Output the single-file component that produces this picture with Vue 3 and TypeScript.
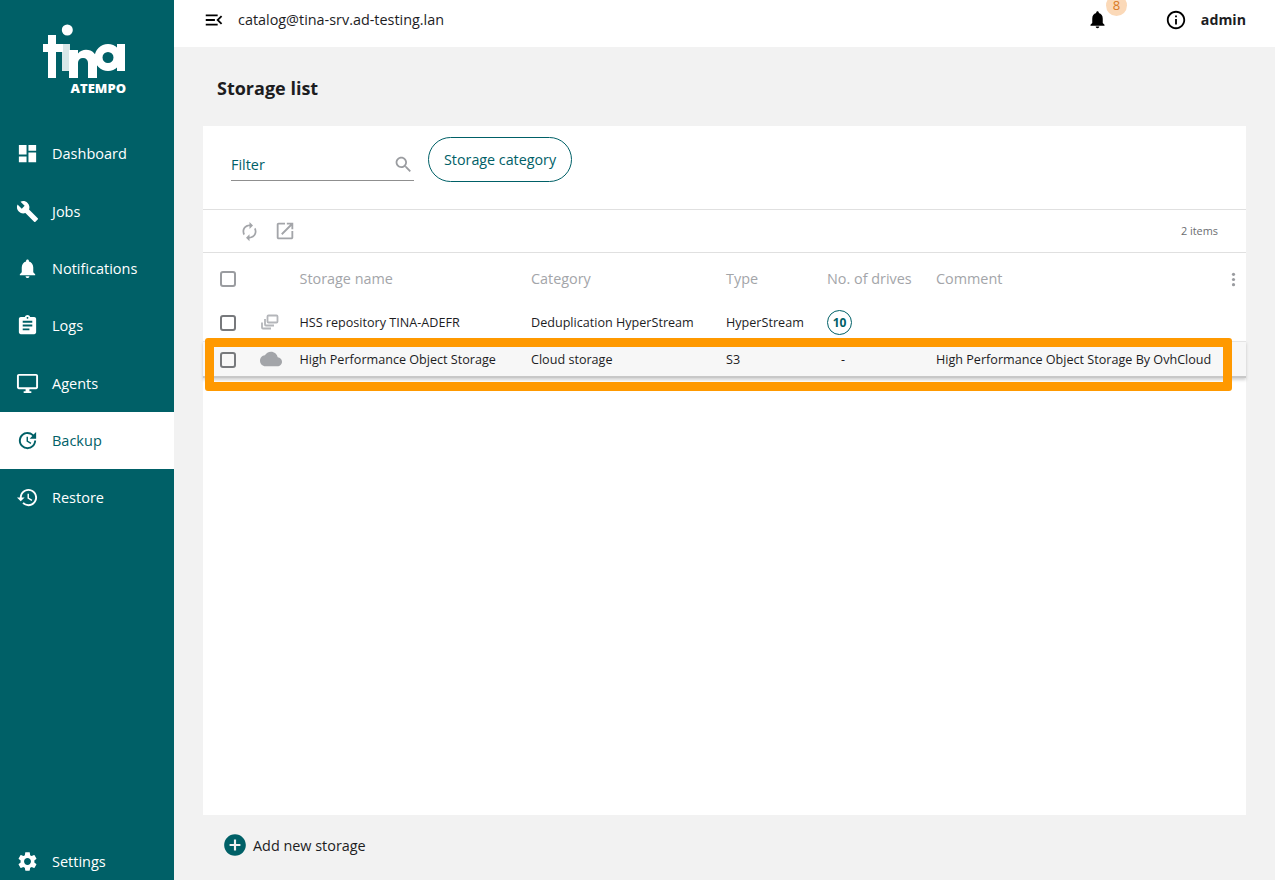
<script setup lang="ts">
interface NavItem {
  label: string;
  icon: string;
  active?: boolean;
}

const nav: NavItem[] = [
  { label: 'Dashboard', icon: 'M3 13h8V3H3v10zm0 8h8v-6H3v6zm10 0h8V11h-8v10zm0-18v6h8V3h-8z' },
  { label: 'Jobs', icon: 'M22.7 19l-9.1-9.1c.9-2.3.4-5-1.5-6.9-2-2-5-2.4-7.4-1.3L9 6 6 9 1.6 4.7C.4 7.1.9 10.1 2.9 12.1c1.9 1.9 4.6 2.4 6.9 1.5l9.1 9.1c.4.4 1 .4 1.4 0l2.3-2.3c.5-.4.5-1.1.1-1.4z' },
  { label: 'Notifications', icon: 'M12 22c1.1 0 2-.9 2-2h-4c0 1.1.89 2 2 2zm6-6v-5c0-3.07-1.64-5.64-4.5-6.32V4c0-.83-.67-1.5-1.5-1.5s-1.5.67-1.5 1.5v.68C7.63 5.36 6 7.92 6 11v5l-2 2v1h16v-1l-2-2z' },
  { label: 'Logs', icon: 'M19 3h-4.18C14.4 1.84 13.3 1 12 1c-1.3 0-2.4.84-2.82 2H5c-1.1 0-2 .9-2 2v14c0 1.1.9 2 2 2h14c1.1 0 2-.9 2-2V5c0-1.1-.9-2-2-2zm-7 0c.55 0 1 .45 1 1s-.45 1-1 1-1-.45-1-1 .45-1 1-1zm2 14H7v-2h7v2zm3-4H7v-2h10v2zm0-4H7V7h10v2z' },
  { label: 'Agents', icon: 'M21 2H3c-1.1 0-2 .9-2 2v12c0 1.1.9 2 2 2h7v2H8v2h8v-2h-2v-2h7c1.1 0 2-.9 2-2V4c0-1.1-.9-2-2-2zm0 14H3V4h18v12z' },
  { label: 'Backup', active: true, icon: 'M21 10.12h-6.78l2.74-2.82c-2.73-2.7-7.15-2.8-9.88-.1-2.73 2.71-2.73 7.08 0 9.79s7.15 2.71 9.88 0C18.32 15.65 19 14.08 19 12.1h2c0 1.98-.88 4.55-2.64 6.29-3.51 3.48-9.21 3.48-12.72 0-3.5-3.47-3.53-9.11-.02-12.58s9.14-3.47 12.65 0L21 3v7.12zM12.5 8v4.25l3.5 2.08-.72 1.21L11 13V8h1.5z' },
  { label: 'Restore', icon: 'M13 3c-4.97 0-9 4.03-9 9H1l3.89 3.89.07.14L9 12H6c0-3.87 3.13-7 7-7s7 3.13 7 7-3.13 7-7 7c-1.93 0-3.68-.79-4.94-2.06l-1.42 1.42C8.27 19.99 10.51 21 13 21c4.97 0 9-4.03 9-9s-4.03-9-9-9zm-1 5v5l4.28 2.54.72-1.21-3.5-2.08V8H12z' },
];

const settingsIcon =
  'M19.14 12.94c.04-.3.06-.61.06-.94 0-.32-.02-.64-.07-.94l2.03-1.58c.18-.14.23-.41.12-.61l-1.92-3.32c-.12-.22-.37-.29-.59-.22l-2.39.96c-.5-.38-1.03-.7-1.62-.94l-.36-2.54c-.04-.24-.24-.41-.48-.41h-3.84c-.24 0-.43.17-.47.41l-.36 2.54c-.59.24-1.13.57-1.62.94l-2.39-.96c-.22-.08-.47 0-.59.22L2.74 8.87c-.12.21-.08.47.12.61l2.03 1.58c-.05.3-.09.63-.09.94s.02.64.07.94l-2.03 1.58c-.18.14-.23.41-.12.61l1.92 3.32c.12.22.37.29.59.22l2.39-.96c.5.38 1.03.7 1.62.94l.36 2.54c.05.24.24.41.48.41h3.84c.24 0 .44-.17.47-.41l.36-2.54c.59-.24 1.13-.56 1.62-.94l2.39.96c.22.08.47 0 .59-.22l1.92-3.32c.12-.22.07-.47-.12-.61l-2.01-1.58zM12 15.6c-1.98 0-3.6-1.62-3.6-3.6s1.62-3.6 3.6-3.6 3.6 1.62 3.6 3.6-1.62 3.6-3.6 3.6z';

const columns = ['Storage name', 'Category', 'Type', 'No. of drives', 'Comment'];
</script>

<template>
  <div class="app">
    <aside class="sidebar">
      <div class="logo">
        <svg class="logo-mark" viewBox="0 0 174 80" width="174" height="80" fill="#fff">
          <rect x="62" y="44" width="8" height="27" opacity="0.85" />
          <rect x="48" y="35" width="8" height="43" />
          <rect x="43" y="44" width="20" height="8" />
          <circle cx="67.3" cy="30" r="5.5" />
          <path d="M69 78V50h9v3.5c2-2.4 5-3.7 8-3.7 6.5 0 11 4.7 11 11.2V78h-9V63c0-3-1.8-5-5-5s-5 2-5 5v15z" />
          <circle cx="108" cy="57.5" r="9.5" fill="none" stroke="#fff" stroke-width="8" />
          <rect x="117" y="44" width="8" height="27" />
        </svg>
        <span class="logo-atempo">ATEMPO</span>
      </div>
      <nav class="nav">
        <a v-for="item in nav" :key="item.label" class="nav-item" :class="{ active: item.active }">
          <svg viewBox="0 0 24 24" width="23" height="23" fill="currentColor"><path :d="item.icon" /></svg>
          <span>{{ item.label }}</span>
        </a>
      </nav>
      <a class="nav-item settings">
        <svg viewBox="0 0 24 24" width="23" height="23" fill="currentColor"><path :d="settingsIcon" /></svg>
        <span>Settings</span>
      </a>
    </aside>

    <div class="main">
      <header class="topbar">
        <svg class="menu-icon" viewBox="0 0 24 24" width="22" height="22" fill="#000">
          <path d="M3 18h13v-2H3v2zm0-5h10v-2H3v2zm0-7v2h13V6H3zm18 9.59L17.42 12 21 8.41 19.59 7l-5 5 5 5L21 15.59z" />
        </svg>
        <span class="catalog">catalog@tina-srv.ad-testing.lan</span>
        <div class="bell">
          <svg viewBox="0 0 24 24" width="21" height="21" fill="#000">
            <path d="M12 22c1.1 0 2-.9 2-2h-4c0 1.1.89 2 2 2zm6-6v-5c0-3.07-1.64-5.64-4.5-6.32V4c0-.83-.67-1.5-1.5-1.5s-1.5.67-1.5 1.5v.68C7.63 5.36 6 7.92 6 11v5l-2 2v1h16v-1l-2-2z" />
          </svg>
          <span class="badge">8</span>
        </div>
        <svg class="info" viewBox="0 0 24 24" width="22" height="22" fill="#000">
          <path d="M11 7h2v2h-2zm0 4h2v6h-2zm1-9C6.48 2 2 6.48 2 12s4.48 10 10 10 10-4.48 10-10S17.52 2 12 2zm0 18c-4.41 0-8-3.59-8-8s3.59-8 8-8 8 3.59 8 8-3.59 8-8 8z" />
        </svg>
        <span class="user">admin</span>
      </header>

      <h1 class="title">Storage list</h1>

      <section class="card">
        <div class="filters">
          <label class="filter">
            <span>Filter</span>
            <svg viewBox="0 0 24 24" width="21" height="21" fill="#9a9ca0">
              <path d="M15.5 14h-.79l-.28-.27C15.41 12.59 16 11.11 16 9.5 16 5.91 13.09 3 9.5 3S3 5.91 3 9.5 5.91 16 9.5 16c1.61 0 3.09-.59 4.23-1.57l.27.28v.79l5 4.99L20.49 19l-4.99-5zm-6 0C7.01 14 5 11.99 5 9.5S7.01 5 9.5 5 14 7.01 14 9.5 11.99 14 9.5 14z" />
            </svg>
          </label>
          <button class="chip" type="button">Storage category</button>
        </div>

        <div class="toolbar">
          <svg viewBox="0 0 24 24" width="21" height="21" fill="#a3a5a9">
            <path d="M12 6v3l4-4-4-4v3c-4.42 0-8 3.58-8 8 0 1.57.46 3.03 1.24 4.26L6.7 14.8c-.45-.83-.7-1.79-.7-2.8 0-3.31 2.69-6 6-6zm6.76 1.74L17.3 9.2c.44.84.7 1.79.7 2.8 0 3.31-2.69 6-6 6v-3l-4 4 4 4v-3c4.42 0 8-3.58 8-8 0-1.57-.46-3.03-1.24-4.26z" />
          </svg>
          <svg viewBox="0 0 24 24" width="22" height="22" fill="#a3a5a9">
            <path d="M19 19H5V5h7V3H5c-1.11 0-2 .9-2 2v14c0 1.1.89 2 2 2h14c1.1 0 2-.9 2-2v-7h-2v7zM14 3v2h3.59l-9.83 9.83 1.41 1.41L19 6.41V10h2V3h-7z" />
          </svg>
          <span class="count">2 items</span>
        </div>

        <div class="row head">
          <span class="check"></span>
          <span></span>
          <span v-for="col in columns" :key="col">{{ col }}</span>
          <svg class="more" viewBox="0 0 4 16" width="5" height="15" fill="#9a9ca0">
            <circle cx="2" cy="2.5" r="1.7" /><circle cx="2" cy="8" r="1.7" /><circle cx="2" cy="13.5" r="1.7" />
          </svg>
        </div>

        <div class="row item">
          <span class="check"></span>
          <svg class="type-icon" viewBox="0 0 20 20" width="20" height="20" fill="none" stroke="#b4b6ba" stroke-width="1.8">
            <rect x="7.5" y="2.5" width="10" height="7" rx="1" />
            <path d="M5 6v5.5a1 1 0 0 0 1 1h8" />
            <path d="M2 9.5v5a1 1 0 0 0 1 1h8" />
          </svg>
          <span>HSS repository TINA-ADEFR</span>
          <span>Deduplication HyperStream</span>
          <span>HyperStream</span>
          <span><span class="drives">10</span></span>
          <span></span>
        </div>

        <div class="row item selected">
          <span class="check"></span>
          <svg class="type-icon" viewBox="0 0 24 24" width="22" height="22" fill="#a3a5a9">
            <path d="M19.35 10.04C18.67 6.59 15.64 4 12 4 9.11 4 6.6 5.64 5.35 8.04 2.34 8.36 0 10.91 0 14c0 3.31 2.69 6 6 6h13c2.76 0 5-2.24 5-5 0-2.64-2.05-4.78-4.65-4.96z" />
          </svg>
          <span>High Performance Object Storage</span>
          <span>Cloud storage</span>
          <span>S3</span>
          <span class="dash">-</span>
          <span>High Performance Object Storage By OvhCloud</span>
          <div class="highlight"></div>
        </div>
      </section>

      <div class="add">
        <svg viewBox="0 0 24 24" width="26" height="26" fill="#006067">
          <path d="M12 2C6.48 2 2 6.48 2 12s4.48 10 10 10 10-4.48 10-10S17.52 2 12 2zm5 11h-4v4h-2v-4H7v-2h4V7h2v4h4v2z" />
        </svg>
        <span>Add new storage</span>
      </div>
    </div>
  </div>
</template>

<style>
html,
body {
  margin: 0;
  overflow: hidden;
}
</style>

<style scoped>
.app {
  display: flex;
  width: 1275px;
  height: 880px;
  overflow: hidden;
  font-family: 'Open Sans', 'Liberation Sans', sans-serif;
  font-size: 14.4px;
  color: #1d1d1f;
  background: #f2f2f2;
}

.sidebar {
  display: flex;
  flex-direction: column;
  flex: 0 0 174px;
  color: #fff;
  background: #006067;
}

.logo {
  display: flex;
  flex-direction: column;
  flex: 0 0 125.25px;
}

.logo-mark {
  display: block;
}

.logo-atempo {
  width: 126px;
  margin-top: 1px;
  font-size: 13px;
  font-weight: 800;
  line-height: 14px;
  text-align: right;
}

.nav {
  display: flex;
  flex-direction: column;
  flex: 1;
}

.nav-item {
  display: flex;
  align-items: center;
  gap: 13px;
  height: 57.3px;
  padding-left: 16px;
  font-size: 14.5px;
}

.nav-item.active {
  color: #006067;
  background: #fff;
}

.settings {
  height: 36px;
  padding-bottom: 1px;
}

.main {
  display: flex;
  flex-direction: column;
  flex: 1;
  min-width: 0;
}

.topbar {
  display: flex;
  align-items: center;
  flex: 0 0 47px;
  box-sizing: border-box;
  padding: 0 29px 8px 0;
  background: #fff;
}

.menu-icon {
  margin-left: 29px;
}

.catalog {
  margin-left: 13px;
}

.bell {
  position: relative;
  display: flex;
  margin-left: auto;
}

.badge {
  position: absolute;
  top: -14px;
  left: 19px;
  width: 21px;
  height: 21px;
  border-radius: 50%;
  font-size: 13px;
  line-height: 21px;
  text-align: center;
  color: #d8791f;
  background: #fbd9b8;
}

.info {
  margin-left: 57px;
}

.user {
  margin-left: 14px;
  font-size: 14.2px;
  font-weight: 700;
}

.title {
  margin: 29px 0 26px 43px;
  font-size: 18px;
  font-weight: 700;
  line-height: 24px;
  color: #1d1d1f;
}

.card {
  flex: 0 0 689px;
  margin: 0 29px;
  background: #fff;
}

.filters {
  display: flex;
  align-items: flex-start;
  gap: 14px;
  box-sizing: border-box;
  height: 84px;
  padding: 11px 0 0 28px;
  border-bottom: 1px solid #e0e0e0;
}

.filter {
  display: flex;
  align-items: center;
  justify-content: space-between;
  box-sizing: border-box;
  width: 183px;
  height: 33px;
  margin-top: 11px;
  padding-top: 1px;
  border-bottom: 1px solid #8f8f8f;
  color: #006067;
}

.chip {
  height: 45px;
  padding: 0 15px;
  border: 1px solid #006067;
  border-radius: 23px;
  font: inherit;
  font-size: 14.3px;
  color: #006067;
  background: #fff;
}

.toolbar {
  display: flex;
  align-items: center;
  gap: 14px;
  box-sizing: border-box;
  height: 43px;
  padding: 0 28px 0 36px;
  border-bottom: 1px solid #e0e0e0;
}

.count {
  margin: -2px 0 0 auto;
  font-size: 10.9px;
  color: #6b6d70;
}

.row {
  position: relative;
  display: grid;
  grid-template-columns: 40px 39.5px 231.5px 195px 101px 109px 1fr;
  align-items: center;
  padding-left: 17px;
  font-size: 12.6px;
}

.head {
  height: 51px;
  font-size: 14.4px;
  color: #a3a5a9;
}

.more {
  position: absolute;
  right: 10px;
  top: 19px;
}

.item {
  height: 37px;
}

.selected {
  box-sizing: border-box;
  background: #f7f7f7;
  border-top: 1px solid #e4e4e4;
  border-bottom: 2px solid #c8c8c8;
  box-shadow: 0 2px 3px rgba(0, 0, 0, 0.18);
}

.check {
  box-sizing: border-box;
  width: 16px;
  height: 16px;
  border: 2px solid #77797c;
  border-radius: 3px;
}

.head .check {
  border-color: #9a9ca0;
}

.selected .check {
  margin-top: 2px;
}

.drives {
  display: inline-block;
  box-sizing: border-box;
  width: 25px;
  height: 25px;
  border: 1px solid #006067;
  border-radius: 50%;
  font-size: 12px;
  font-weight: 700;
  line-height: 23px;
  text-align: center;
  color: #006067;
}

.dash {
  padding-left: 14px;
}

/* annotation drawn over the selected row */
.highlight {
  position: absolute;
  top: -4px;
  left: 2px;
  width: 1027px;
  height: 53px;
  box-sizing: border-box;
  border: 9px solid #ff9900;
  border-radius: 3px;
}

.add {
  display: flex;
  align-items: center;
  gap: 5px;
  margin: 17px 0 0 48px;
}
</style>
